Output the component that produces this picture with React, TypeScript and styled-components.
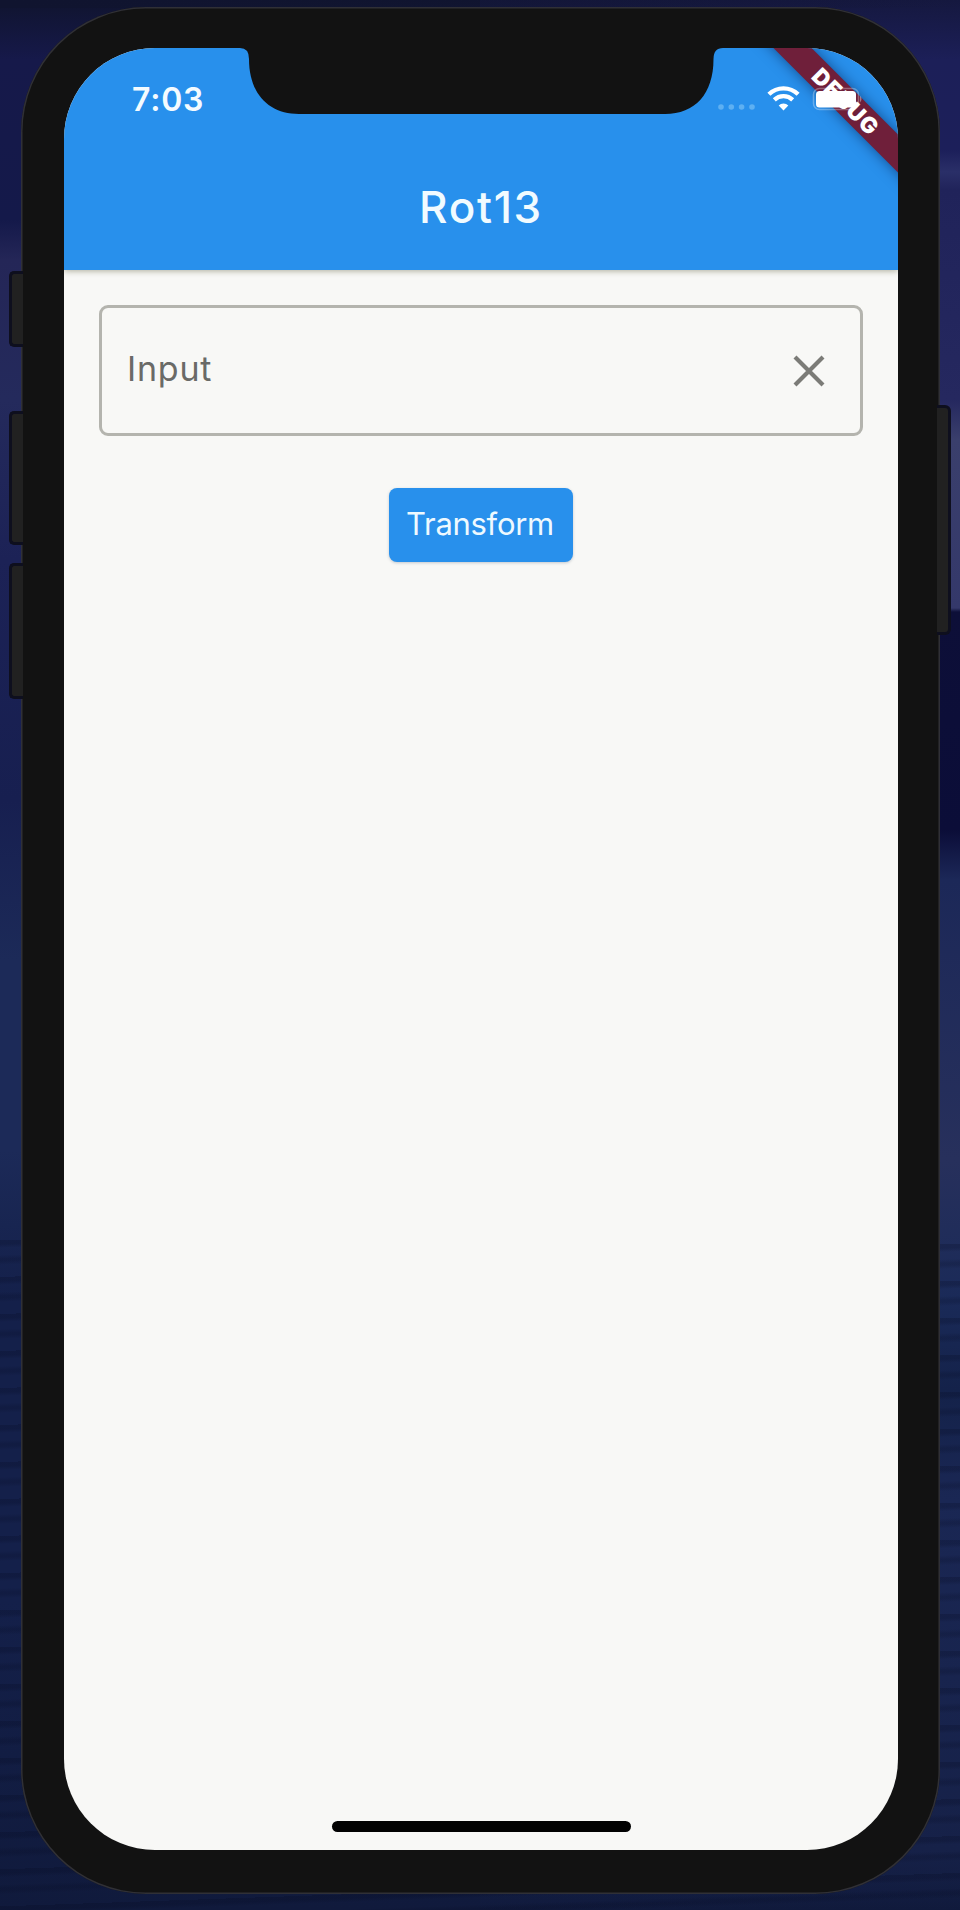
import React from "react";
import styled, { createGlobalStyle } from "styled-components";

const Global = createGlobalStyle`
  * { box-sizing: border-box; }
  body { margin: 0; background: #14183c; font-family: Inter, "Liberation Sans", sans-serif; }
`;

const Desktop = styled.main`
  width: 960px;
  height: 1910px;
  padding: 7px 20px 17px 21px;
  overflow: hidden;
  background:
    repeating-linear-gradient(178deg, rgba(4, 8, 30, 0.22) 0 4px, transparent 8px 15px, rgba(4, 8, 30, 0.18) 19px 21px, transparent 25px 37px) bottom / 100% 670px no-repeat,
    linear-gradient(90deg, #10142f 0, rgba(16, 20, 47, 0) 100%) top / 100% 8px no-repeat,
    linear-gradient(180deg, #15183f 0, #1c1f58 60px, #1c1f5a 150px, #2a2f68 172px, #20235a 190px, #25285f 400px, #3a3f6c 440px, #34386a 608px, #0d0f38 612px, #0b0d38 830px, #1c2858 880px, #27305c 1160px, #1a2a58 1300px, #14224a 1390px, #1a2754 1500px, #162148 1850px, rgba(20, 30, 66, 0) 1910px) right / 480px 100% no-repeat,
    linear-gradient(180deg, #10142f 0, #16194a 60px, #14194a 220px, #242657 260px, #242a5c 400px, #1c2256 560px, #171f50 800px, #1c2a58 960px, #1c2a58 1150px, #14204a 1300px, #14204a 1600px, #101a3c 1910px);
`;

const Phone = styled.div`
  position: relative;
  width: 919px;
  height: 1887px;
  padding: 41px 42px 44px 43px;
  border-radius: 125px;
  background: #121212;
  box-shadow: inset 0 0 0 1.5px #303036;
`;

const SideButton = styled.span<{ $side: "left" | "right"; $top: number; $height: number }>`
  position: absolute;
  ${(p) => p.$side}: ${(p) => (p.$side === "left" ? -12 : -11)}px;
  top: ${(p) => p.$top}px;
  width: 14px;
  height: ${(p) => p.$height}px;
  border: 3px solid #0e0f1e;
  border-${(p) => (p.$side === "left" ? "right" : "left")}: 0;
  border-radius: ${(p) => (p.$side === "left" ? "5px 0 0 5px" : "0 6px 6px 0")};
  background: #212121;
`;

const Screen = styled.div`
  position: relative;
  display: flex;
  flex-direction: column;
  width: 834px;
  height: 1802px;
  overflow: hidden;
  border-radius: 91px;
  background: #f8f8f6;
`;

const Notch = styled.svg`
  position: absolute;
  z-index: 4;
  top: 0;
  left: 174px;
`;

const TopBar = styled.header`
  flex: none;
  height: 222px;
  background: #2890ec;
  box-shadow: 0 1px 6px rgba(60, 60, 20, 0.4);
`;

const StatusRow = styled.div`
  display: flex;
  justify-content: space-between;
  align-items: center;
  height: 104px;
  padding: 0 36px 0 68px;
`;

const Clock = styled.time`
  color: #f4fbff;
  font-size: 32px;
  font-weight: 600;
  line-height: 40px;
  letter-spacing: 0.8px;
`;

const StatusIcons = styled.div`
  position: relative;
  z-index: 3;
  display: flex;
  align-items: center;
`;

const Title = styled.h1`
  margin: 0;
  padding-top: 28px;
  color: #f1fbff;
  font-size: 44px;
  font-weight: 500;
  line-height: 54px;
  letter-spacing: 1.7px;
  text-align: center;
`;

const RibbonClip = styled.div`
  position: absolute;
  z-index: 2;
  top: 0;
  right: 0;
  width: 180px;
  height: 180px;
  overflow: hidden;
`;

const Ribbon = styled.div`
  position: absolute;
  top: 38.5px;
  right: -61.5px;
  width: 230px;
  height: 27px;
  padding-left: 3px;
  transform: rotate(45deg);
  background: #6f1f3a;
  box-shadow: 0 0 14px rgba(0, 20, 60, 0.55);
  color: #fff;
  font-size: 22.5px;
  font-weight: 900;
  line-height: 27px;
  letter-spacing: 1.2px;
  text-align: center;
`;

const Content = styled.section`
  display: flex;
  flex: 1;
  flex-direction: column;
  align-items: center;
  padding: 35px 35px 18px;
`;

const Field = styled.div`
  display: flex;
  justify-content: space-between;
  align-items: center;
  align-self: stretch;
  height: 131px;
  padding: 0 35px 0 25px;
  border: 3px solid #b4b4ae;
  border-radius: 9px;
`;

const Label = styled.label`
  padding-bottom: 3px;
  color: #6a6a67;
  font-size: 34px;
  font-weight: 400;
  line-height: 42px;
  letter-spacing: 0.8px;
`;

const ClearIcon = styled.svg`
  display: block;
`;

const TransformButton = styled.button`
  width: 184px;
  height: 74px;
  margin-top: 52px;
  padding: 0 2px 3px 0;
  border: 0;
  border-radius: 8px;
  background: #2890ec;
  box-shadow: 0 1px 3px rgba(40, 60, 90, 0.25);
  color: #eef9ff;
  font-family: inherit;
  font-size: 31px;
  font-weight: 400;
  letter-spacing: -0.3px;
`;

const HomeIndicator = styled.div`
  width: 299px;
  height: 11px;
  margin-top: auto;
  border-radius: 6px;
  background: #020202;
`;

export default function App() {
  return (
    <>
      <Global />
      <Desktop>
        <Phone>
          <SideButton $side="left" $top={264} $height={76} />
          <SideButton $side="left" $top={404} $height={134} />
          <SideButton $side="left" $top={556} $height={136} />
          <SideButton $side="right" $top={398} $height={230} />
          <Screen>
            <TopBar>
              <StatusRow>
                <Clock>7:03</Clock>
                <StatusIcons>
                  <svg width="146" height="30" viewBox="0 0 146 30" aria-hidden="true">
                    <g fill="#5eb0f2">
                      <circle cx="5" cy="22" r="2.8" />
                      <circle cx="15.3" cy="22" r="2.8" />
                      <circle cx="25.6" cy="22" r="2.8" />
                      <circle cx="36" cy="22" r="2.8" />
                    </g>
                    <g fill="none" stroke="#fff" strokeWidth="4.3">
                      <path d="M52.9 9.2a21 21 0 0 1 29.2 0" />
                      <path d="M58.3 14.9a13.3 13.3 0 0 1 18.4 0" />
                    </g>
                    <path d="M67.5 25.5l-4.8-4.9a6.8 6.8 0 0 1 9.6 0z" fill="#fff" />
                    <rect x="97.5" y="3.5" width="45" height="21" rx="6" fill="none" stroke="#fff" strokeOpacity=".3" strokeWidth="1.5" />
                    <rect x="100" y="6" width="40" height="16.5" rx="3.5" fill="#fff" />
                    <path d="M144 10.5q3 3.5 0 7z" fill="#fff" opacity=".4" />
                  </svg>
                </StatusIcons>
              </StatusRow>
              <Title>Rot13</Title>
            </TopBar>
            <RibbonClip>
              <Ribbon>DEBUG</Ribbon>
            </RibbonClip>
            <Notch width="488" height="67" viewBox="0 0 488 67" aria-hidden="true">
              <path d="M0 0H2Q11 0 11 11C11 46 31 66 61 66H427C457 66 475.5 46 475.5 11Q475.5 0 485 0H488V-1H0Z" fill="#121212" />
            </Notch>
            <Content>
              <Field>
                <Label>Input</Label>
                <ClearIcon width="32" height="32" viewBox="0 0 32 32" aria-hidden="true">
                  <path d="M2 2L30 30M30 2L2 30" stroke="#7b7b77" strokeWidth="4.2" fill="none" />
                </ClearIcon>
              </Field>
              <TransformButton type="button">Transform</TransformButton>
              <HomeIndicator />
            </Content>
          </Screen>
        </Phone>
      </Desktop>
    </>
  );
}
